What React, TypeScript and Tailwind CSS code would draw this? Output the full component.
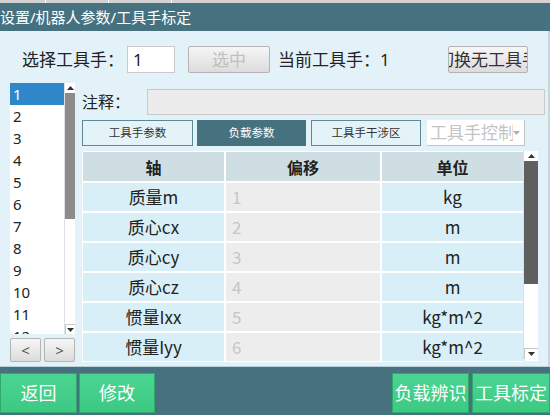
import React from "react";

const rows = [
  { axis: "质量m", offset: "1", unit: "kg" },
  { axis: "质心cx", offset: "2", unit: "m" },
  { axis: "质心cy", offset: "3", unit: "m" },
  { axis: "质心cz", offset: "4", unit: "m" },
  { axis: "惯量Ixx", offset: "5", unit: "kg*m^2" },
  { axis: "惯量Iyy", offset: "6", unit: "kg*m^2" },
];

const tools = ["1", "2", "3", "4", "5", "6", "7", "8", "9", "10", "11", "12"];

const grayBtn =
  "bg-gradient-to-b from-[#f6f6f6] to-[#dcdcdc] border border-[#b4b4b4] rounded-[2px] flex items-center justify-center overflow-hidden whitespace-nowrap";

const greenBtn =
  "h-[40px] bg-gradient-to-b from-[#4bd592] to-[#3cc982] border border-[#2fa86b] text-white text-[18px] flex items-center justify-center";

function UpArrow() {
  return (
    <svg width="7" height="4" viewBox="0 0 7 4">
      <path d="M0 4 L3.5 0 L7 4 Z" fill="#333" />
    </svg>
  );
}

function DownArrow({ color = "#333" }: { color?: string }) {
  return (
    <svg width="7" height="4" viewBox="0 0 7 4">
      <path d="M0 0 L3.5 4 L7 0 Z" fill={color} />
    </svg>
  );
}

export default function App() {
  return (
    <div className="w-[550px] h-[415px] overflow-hidden flex flex-col font-['Noto_Sans','Noto_Sans_CJK_SC',sans-serif] text-[#222]">
      {/* top strip */}
      <div className="h-[3px] bg-[#d2d2d2] flex">
        <div className="w-[45px]" />
        <div className="w-[1px] bg-white" />
        <div className="w-[62px]" />
        <div className="w-[1px] bg-white" />
        <div className="w-[62px]" />
        <div className="w-[1px] bg-white" />
      </div>

      {/* title */}
      <div className="h-[28px] bg-[#46727f] text-white text-[15px] flex items-center">
        设置/机器人参数/工具手标定
      </div>

      {/* body */}
      <div className="h-[335px] bg-[#e2f2f8] border-r-2 border-[#c5d7dc] pt-[15px] flex flex-col">
        <div className="h-[27px] flex items-center text-[17px]">
          <span className="ml-[22px] w-[105px]">选择工具手：</span>
          <div className="w-[48px] h-[27px] bg-white border border-[#c9c9c9] flex items-center pl-[5px]">1</div>
          <div className={`${grayBtn} ml-[13px] w-[82px] h-[27px] text-[#c0c0c0]`}>选中</div>
          <span className="ml-[8px] w-[170px]">当前工具手：1</span>
          <div className={`${grayBtn} w-[80px] h-[27px] text-[#333]`}>切换无工具手</div>
        </div>

        <div className="mt-[10px] flex">
          {/* tool list */}
          <div className="ml-[10px] w-[65px] flex flex-col">
            <div className="h-[251px] flex bg-white overflow-hidden">
              <div className="w-[54px] flex flex-col text-[15px]">
                {tools.map((t, i) => (
                  <div
                    key={t}
                    className={`h-[22px] shrink-0 pl-[3px] flex items-center ${i === 0 ? "bg-[#2d87c9] text-white" : ""}`}
                  >
                    {t}
                  </div>
                ))}
              </div>
              <div className="w-[11px] flex flex-col border-l border-[#e0e0e0]">
                <div className="h-[10px] flex items-center justify-center">
                  <UpArrow />
                </div>
                <div className="h-[126px] bg-[#8b8b8b]" />
                <div className="flex-1" />
                <div className="h-[10px] flex items-center justify-center border-t border-l border-[#c8c8c8]">
                  <DownArrow />
                </div>
              </div>
            </div>
            <div className="mt-[4px] h-[24px] flex gap-[3px]">
              <div className={`${grayBtn} w-[31px] h-[24px] text-[15px] text-[#555]`}>&lt;</div>
              <div className={`${grayBtn} w-[31px] h-[24px] text-[15px] text-[#555]`}>&gt;</div>
            </div>
          </div>

          {/* right column */}
          <div className="ml-[7px] w-[463px] flex flex-col">
            <div className="mt-[6px] h-[26px] flex items-center">
              <span className="w-[65px] text-[16px]">注释：</span>
              <div className="flex-1 h-[26px] bg-[#ececec] border border-[#c9c9c9]" />
            </div>

            <div className="mt-[5px] h-[26px] flex items-center text-[11.5px]">
              <div className="w-[111px] h-[26px] border border-[#5d8894] bg-[#e4f3f8] flex items-center justify-center text-[#333]">
                工具手参数
              </div>
              <div className="ml-[4px] w-[109px] h-[26px] bg-[#46727f] text-white flex items-center justify-center">
                负载参数
              </div>
              <div className="ml-[5px] w-[110px] h-[26px] border border-[#5d8894] bg-[#e4f3f8] flex items-center justify-center text-[#333]">
                工具手干涉区
              </div>
              <div className="ml-[6px] w-[98px] h-[26px] bg-white border-r border-b border-[#c4c4c4] flex items-center overflow-hidden">
                <span className="w-[86px] overflow-hidden whitespace-nowrap text-[17px] text-[#c4c4c4] pl-[3px]">工具手控制</span>
                <DownArrow color="#b0b0b0" />
              </div>
            </div>

            <div className="mt-[5px] flex">
              <div className="bg-white p-[1px] pr-0">
                <div className="grid grid-cols-[141px_154px_141px] gap-[2px] text-[17px] font-['Noto_Sans_CJK_SC',sans-serif]">
                  <div className="h-[29px] bg-[#cfdee2] font-bold text-[16px] flex items-center justify-center">轴</div>
                  <div className="h-[29px] bg-[#cfdee2] font-bold text-[16px] flex items-center justify-center">偏移</div>
                  <div className="h-[29px] bg-[#cfdee2] font-bold text-[16px] flex items-center justify-center">单位</div>
                  {rows.map((r) => (
                    <React.Fragment key={r.axis}>
                      <div className="h-[28px] bg-[#d9eff7] flex items-center justify-center">{r.axis}</div>
                      <div className="h-[28px] bg-[#ededed] text-[#c6c6c6] flex items-center pl-[6px]">{r.offset}</div>
                      <div className="h-[28px] bg-[#d9eff7] flex items-center justify-center">{r.unit}</div>
                    </React.Fragment>
                  ))}
                </div>
              </div>
              <div className="w-[15px] h-[210px] bg-white flex flex-col border-l border-[#e0e0e0]">
                <div className="h-[10px] flex items-center justify-center">
                  <UpArrow />
                </div>
                <div className="h-[123px] bg-[#5f5f5f]" />
                <div className="flex-1" />
                <div className="h-[11px] flex items-center justify-center border-t border-l border-[#c8c8c8]">
                  <DownArrow />
                </div>
                <div className="h-[2px]" />
              </div>
            </div>
          </div>
        </div>
      </div>

      {/* bottom bar */}
      <div className="h-[49px] bg-[#46727f] border-t border-[#b8d2da] pt-[6px] flex">
        <div className={`${greenBtn} w-[77px]`}>返回</div>
        <div className={`${greenBtn} ml-[2px] w-[76px]`}>修改</div>
        <div className="flex-1" />
        <div className={`${greenBtn} w-[77px]`}>负载辨识</div>
        <div className={`${greenBtn} ml-[3px] w-[78px]`}>工具标定</div>
      </div>
    </div>
  );
}
